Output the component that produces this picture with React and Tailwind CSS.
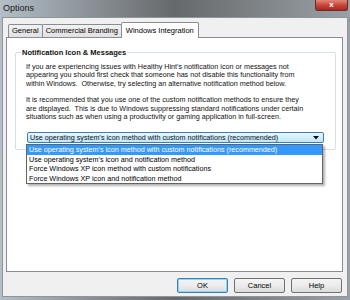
import React from "react";

const items = [
  "Use operating system's icon method with custom notifications (recommended)",
  "Use operating system's icon and notification method",
  "Force Windows XP icon method with custom notifications",
  "Force Windows XP icon and notification method",
];

function Tab({ label, active }) {
  if (active) {
    return (
      <div className="h-[16px] -mb-px px-[4px] pt-[2px] bg-white border border-b-0 border-[#898c95] rounded-t-[2px] text-[7.5px] leading-[12px] text-black relative z-10">
        {label}
      </div>
    );
  }
  return (
    <div className="h-[13px] px-[3px] bg-gradient-to-b from-[#f2f2f2] to-[#e1e1e1] border border-b-0 border-[#898c95] rounded-t-[2px] text-[7.5px] leading-[12px] text-black -mr-px">
      {label}
    </div>
  );
}

function DialogButton({ label, primary }) {
  return (
    <div
      className={`w-[51px] h-[15px] rounded-[2px] border flex items-center justify-center text-[7.5px] text-black bg-gradient-to-b from-[#f4f4f4] via-[#ececec] to-[#dcdcdc] ${
        primary ? "border-[#3c7fb1] shadow-[inset_0_0_0_1px_#93d2f3]" : "border-[#707070]"
      }`}
    >
      {label}
    </div>
  );
}

export default function App() {
  return (
    <div className="w-[350px] h-[300px] flex flex-col bg-gradient-to-r from-[#b3bec6] via-[#66696c] to-[#9aa1a6] font-['Liberation_Sans',Arial,sans-serif] overflow-hidden">
      {/* Title bar */}
      <div className="h-[17px] flex items-start justify-between">
        <span className="pl-[3px] pt-[3px] text-[9px] leading-[10px] text-[#1a1a1a]">Options</span>
        <div className="w-[33px] h-[11px] mr-[2px] rounded-b-[3px] border border-t-0 border-[#6b2a2a] bg-gradient-to-b from-[#e0877a] via-[#c9463a] to-[#a8281d] flex items-center justify-center text-white text-[8px] font-bold leading-none">
          x
        </div>
      </div>

      {/* Client */}
      <div className="flex-1 mx-[2px] mb-[3px] bg-[#f0f0f0] border border-[#8e969d] flex flex-col pl-[3px] pr-[4px]">
        {/* Tabs */}
        <div className="h-[19px] flex items-end pl-[2px]">
          <Tab label="General" />
          <Tab label="Commercial Branding" />
          <Tab label="Windows Integration" active />
        </div>

        {/* Panel */}
        <div className="h-[235px] bg-white border border-[#898c95] relative pl-[8px] pr-[6px] pt-[14px]">
          <div className="h-[98px] border border-[#d5dfe5] rounded-[2px] relative pl-[10px] pt-[10px] text-[7.2px] leading-[8.4px] text-[#111]">
            <span className="absolute -top-[5px] left-[5px] bg-white px-[1px] font-bold text-[7.5px] leading-[9px]">
              Notification Icon &amp; Messages
            </span>
            <p className="whitespace-nowrap">
              If you are experiencing issues with Healthy Hint's notification icon or messages not
              <br />
              appearing you should first check that someone has not disable this functionality from
              <br />
              within Windows.&nbsp; Otherwise, try selecting an alternative notification method below.
            </p>
            <p className="whitespace-nowrap mt-[8px]">
              It is recommended that you use one of the custom notification methods to ensure they
              <br />
              are displayed.&nbsp; This is due to Windows suppressing standard notifications under certain
              <br />
              situations such as when using a productivity or gaming application in full-screen.
            </p>

            {/* Combo */}
            <div className="mt-[11px] ml-px w-[297px] h-[11px] border border-[#3c7fb1] rounded-[2px] bg-gradient-to-b from-[#eaf6fd] to-[#bee6fd] flex items-center justify-between pl-[2px] pr-[4px] whitespace-nowrap">
              <span>{items[0]}</span>
              <svg width="6" height="4" viewBox="0 0 6 4">
                <path d="M0 0 L6 0 L3 3.5 Z" fill="#111" />
              </svg>
            </div>

            {/* Open list */}
            <div className="absolute left-[10px] top-[91px] w-[297px] bg-white border border-[#646464] shadow-[2px_2px_2px_rgba(0,0,0,0.3)] z-20 whitespace-nowrap">
              {items.map((t, i) => (
                <div
                  key={t}
                  className={`h-[9.5px] leading-[9.5px] pl-[2px] ${i === 0 ? "bg-[#3399ff] text-white" : "text-black"}`}
                >
                  {t}
                </div>
              ))}
            </div>
          </div>
        </div>

        {/* Buttons */}
        <div className="flex justify-end gap-[6px] mt-[6px] pr-px">
          <DialogButton label="OK" primary />
          <DialogButton label="Cancel" />
          <DialogButton label="Help" />
        </div>
      </div>
    </div>
  );
}
